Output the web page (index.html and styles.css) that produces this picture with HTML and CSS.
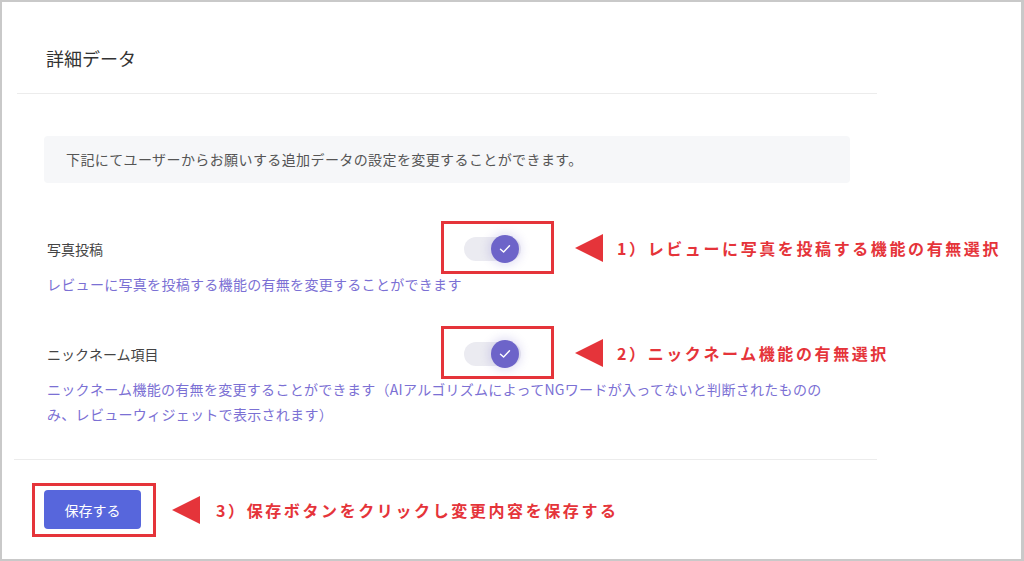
FILE: index.html
```html
<!DOCTYPE html>
<html lang="ja">
<head>
<meta charset="utf-8">
<title>詳細データ</title>
<link rel="stylesheet" href="styles.css">
</head>
<body>
<div class="frame">
  <section class="card">
    <header class="card-header">
      <h2 class="card-title">詳細データ</h2>
    </header>
    <div class="card-body">
      <p class="notice">下記にてユーザーからお願いする追加データの設定を変更することができます。</p>

      <div class="setting setting-first">
        <div class="setting-row">
          <span class="setting-label">写真投稿</span>
          <div class="toggle-wrap">
            <span class="toggle"><span class="toggle-knob"><svg viewBox="0 0 12 10" width="12" height="10"><path d="M1.5 5.2 L4.6 8 L10.5 1.8" fill="none" stroke="#fff" stroke-width="1.4" stroke-linecap="round" stroke-linejoin="round"/></svg></span></span>
            <div class="callout callout-toggle">
              <span class="callout-box"></span>
              <span class="callout-arrow"></span>
              <span class="callout-note">1）レビューに写真を投稿する機能の有無選択</span>
            </div>
          </div>
        </div>
        <p class="setting-desc">レビューに写真を投稿する機能の有無を変更することができます</p>
      </div>

      <div class="setting">
        <div class="setting-row">
          <span class="setting-label">ニックネーム項目</span>
          <div class="toggle-wrap">
            <span class="toggle"><span class="toggle-knob"><svg viewBox="0 0 12 10" width="12" height="10"><path d="M1.5 5.2 L4.6 8 L10.5 1.8" fill="none" stroke="#fff" stroke-width="1.4" stroke-linecap="round" stroke-linejoin="round"/></svg></span></span>
            <div class="callout callout-toggle">
              <span class="callout-box"></span>
              <span class="callout-arrow"></span>
              <span class="callout-note">2）ニックネーム機能の有無選択</span>
            </div>
          </div>
        </div>
        <p class="setting-desc">ニックネーム機能の有無を変更することができます（AIアルゴリズムによってNGワードが入ってないと判断されたもののみ、レビューウィジェットで表示されます）</p>
      </div>
    </div>
    <footer class="card-footer">
      <div class="btn-wrap">
        <button class="btn" type="button">保存する</button>
        <div class="callout callout-btn">
          <span class="callout-box"></span>
          <span class="callout-arrow"></span>
          <span class="callout-note">3）保存ボタンをクリックし変更内容を保存する</span>
        </div>
      </div>
    </footer>
  </section>
</div>
</body>
</html>
```
FILE: styles.css
```css
html, body {
  margin: 0;
  padding: 0;
  background: #ffffff;
  overflow: hidden;
}

body {
  font-family: "Noto Sans CJK JP", "Noto Sans", sans-serif;
  color: #444;
}

.frame {
  box-sizing: border-box;
  width: 1024px;
  height: 561px;
  border: 2px solid #c9c9c9;
  border-right-width: 3px;
  background: #fff;
}

.card {
  margin-left: 15px;
  width: 860px;
}

.card-header {
  height: 92px;
  box-sizing: border-box;
  padding: 43px 0 0 29px;
  border-bottom: 1px solid #ececec;
}

.card-title {
  margin: 0;
  font-size: 18px;
  line-height: 26px;
  font-weight: 400;
  color: #333;
}

.card-body {
  padding: 42px 27px 32px;
}

.notice {
  margin: 0;
  height: 47px;
  box-sizing: border-box;
  padding: 0 22px;
  line-height: 47px;
  font-size: 14px;
  letter-spacing: 0.4px;
  color: #555;
  background: #f6f7f9;
  border-radius: 4px;
}

.setting {
  padding-left: 3px;
  margin-top: 43px;
}

.setting-first {
  margin-top: 52px;
}

.setting-row {
  display: flex;
  align-items: center;
  height: 28px;
}

.setting-label {
  flex: 0 0 417px;
  font-size: 14px;
  color: #444;
}

.setting-desc {
  margin: 9px 0 0;
  max-width: 786px;
  font-size: 14px;
  line-height: 25px;
  letter-spacing: 0.3px;
  color: #7b70d4;
}

.toggle-wrap {
  position: relative;
}

.toggle {
  display: block;
  position: relative;
  width: 57px;
  height: 28px;
}

.toggle::before {
  content: "";
  position: absolute;
  left: 0;
  right: 0;
  top: 2px;
  height: 24px;
  border-radius: 12px;
  background: #ebebf1;
}

.toggle-knob {
  position: absolute;
  left: 27px;
  top: 0;
  width: 28px;
  height: 28px;
  border-radius: 50%;
  background: #6d64c9;
  box-shadow: 0 0 9px 3px rgba(109, 100, 201, 0.18);
  display: flex;
  align-items: center;
  justify-content: center;
}

.callout {
  position: absolute;
  display: flex;
  align-items: center;
  pointer-events: none;
}

.callout-toggle {
  left: -23px;
  top: -14px;
}

.callout-box {
  box-sizing: border-box;
  width: 113px;
  height: 53px;
  border: 3px solid #e5343a;
}

.callout-arrow {
  margin-left: 21px;
  width: 0;
  height: 0;
  border-top: 14.5px solid transparent;
  border-bottom: 14.5px solid transparent;
  border-right: 28px solid #e5343a;
}

.callout-note {
  margin-left: 14px;
  white-space: nowrap;
  font-size: 16px;
  font-weight: 700;
  letter-spacing: 2.6px;
  color: #e5343a;
}

.card-footer {
  margin-left: -3px;
  padding: 30px 0 0 30px;
  border-top: 1px solid #ececec;
}

.btn-wrap {
  position: relative;
  display: inline-block;
}

.btn {
  display: block;
  width: 97px;
  height: 39px;
  border: 0;
  border-radius: 4px;
  background: #5766dc;
  color: #fff;
  font-family: "Noto Sans CJK JP", "Noto Sans", sans-serif;
  font-size: 14px;
  padding: 0;
}

.callout-btn {
  left: -12px;
  top: -7px;
}

.callout-btn .callout-box {
  width: 124px;
  height: 54px;
}

.callout-btn .callout-arrow {
  margin-left: 16px;
}

.callout-btn .callout-note {
  margin-left: 16px;
}
```
